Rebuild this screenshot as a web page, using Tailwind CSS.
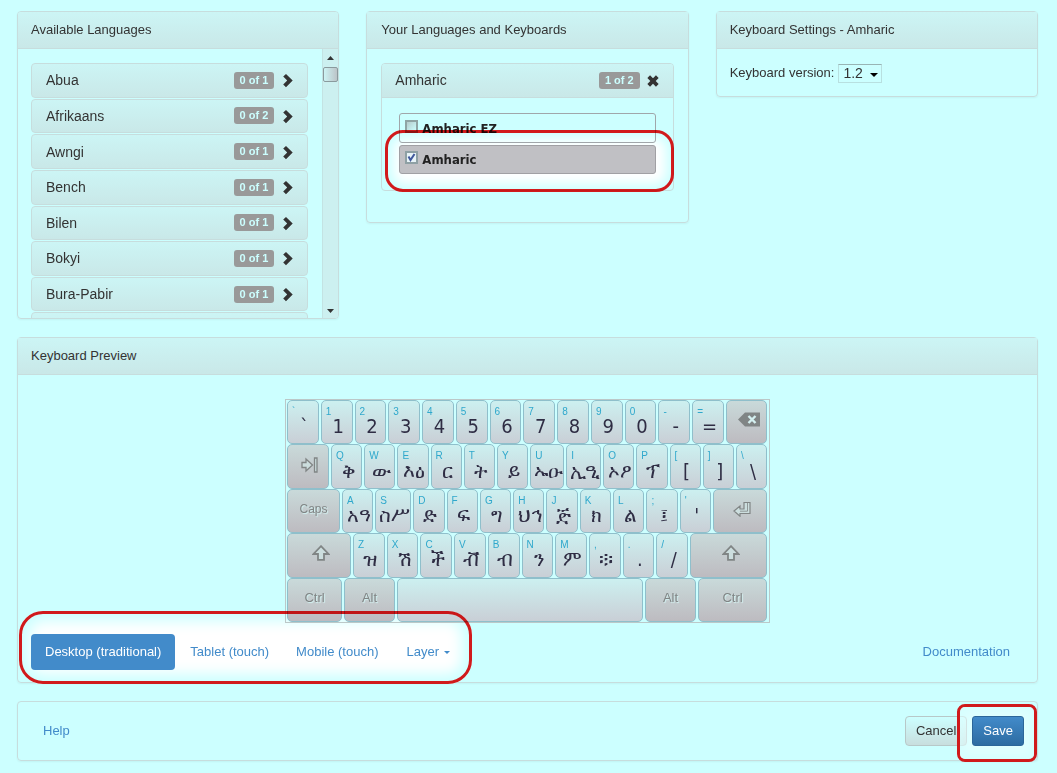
<!DOCTYPE html>
<html lang="en">
<head>
<meta charset="utf-8">
<title>Keyboard Configuration</title>
<script src="https://cdn.jsdelivr.net/npm/@tailwindcss/browser@4"></script>
</head>
<body class="min-h-screen bg-[#ccffff] pt-[11px] pr-[19px] pb-3 pl-[17px] font-['Liberation_Sans',Arial,sans-serif] text-[13px] leading-5 text-[#333333]">

<svg class="hidden" aria-hidden="true">
  <symbol id="chevron" viewBox="0 0 11 15"><path d="M1.2 3.6 4 .9 10.7 7.6 4 14.2 1.2 11.5 5.2 7.6Z" fill="#333"/></symbol>
</svg>

<main class="flex flex-col gap-[18px]">
  <div class="grid grid-cols-3 items-start gap-[27px]">

    <section class="flex h-[308px] flex-col overflow-hidden rounded-[4px] border border-[#c7dddd] shadow-xs">
      <h2 class="border-b border-[#c7dddd] bg-linear-to-b from-[#ccf5f5] to-[#c9e8e8] px-[13px] py-2">Available Languages</h2>
      <div class="flex min-h-0 flex-1">
        <ul id="languages" class="grid h-[284px] flex-1 grid-rows-8 gap-px mt-[14px] mr-[14px] ml-[13px]"></ul>
        <div class="flex w-4 flex-col items-center justify-between border-l border-[#c3e3e3] bg-[#ccf0f0] pt-[7px] pb-[5px]" aria-hidden="true">
          <div class="flex w-full flex-col items-center gap-[7px]">
            <svg width="7" height="4"><path d="M0 4 3.500 0 7 4Z" fill="#333"/></svg>
            <div class="h-[15px] w-full rounded-[2px] border border-[#8a9a9d] bg-linear-to-r from-[#ccf4f4] to-[#bcc4c8]"></div>
          </div>
          <svg width="7" height="4"><path d="M0 0 3.500 4 7 0Z" fill="#333"/></svg>
        </div>
      </div>
    </section>

    <section class="relative rounded-[4px] border border-[#c7dddd] pb-[31px] shadow-xs">
      <h2 class="border-b border-[#c7dddd] bg-linear-to-b from-[#ccf5f5] to-[#c9e8e8] px-[14px] py-2">Your Languages and Keyboards</h2>
      <div class="absolute top-[118px] right-[14px] left-[18px] h-[62px] rounded-[18px] bg-white shadow-[inset_0_0_12px_8px_#ccffff]"></div>
      <div class="relative mx-[14px] mt-[14px] rounded-[4px] border border-[#c7dddd]">
        <div class="flex items-center rounded-t-[3px] border-b border-[#c7dddd] bg-linear-to-b from-[#ccf5f5] to-[#c9e8e8] py-[7px] pr-[14px] pl-[13px]">
          <h3 class="flex-1 text-[14px] leading-[19px]">Amharic</h3>
          <span class="rounded-[3px] bg-[#999999] px-[6px] text-[11px] leading-[17px] font-bold text-[#ccffff]">1 of 2</span>
          <button type="button" aria-label="Remove Amharic" class="ml-[7px]">
            <svg class="mt-px" width="12" height="12" viewBox="0 0 12 12"><path d="M1.700 1.700 10.300 10.300M10.300 1.700 1.700 10.300" stroke="#333" stroke-width="3.800"/></svg>
          </button>
        </div>
        <div class="flex flex-col gap-[2px] px-[17px] pt-[15px] pb-4 font-['DejaVu_Sans_Condensed','DejaVu_Sans',sans-serif] text-[13px] font-bold text-[#222222]">
          <label class="flex h-[30px] rounded-[3px] border border-[#a0a6aa] px-[5px] pt-[6px]">
            <input type="checkbox" class="mr-1 size-[13px] appearance-none border-2 border-[#8ea4a4] bg-linear-to-br from-[#b4cccc] to-[#ccffff]">
            <span class="leading-[17px]">Amharic EZ</span>
          </label>
          <label class="flex h-[29px] rounded-[3px] border border-[#a0a0a4] bg-[#c0c0c4] px-[5px] pt-[5px]">
            <span class="relative mr-1 size-[13px]">
              <input type="checkbox" checked class="block size-[13px] appearance-none border-2 border-[#8ea0a4] bg-[#e8f4f8]">
              <svg class="pointer-events-none absolute inset-0" width="13" height="13"><path d="M3.500 5.500 5.500 9 9.500 3" fill="none" stroke="#40589c" stroke-width="2"/></svg>
            </span>
            <span class="leading-[17px]">Amharic</span>
          </label>
        </div>
      </div>
      <div class="pointer-events-none absolute top-[118px] right-[14px] left-[18px] h-[62px] rounded-[18px] border-3 border-[#ff1a1c] mix-blend-multiply"></div>
    </section>

    <section class="rounded-[4px] border border-[#c7dddd] shadow-xs">
      <h2 class="border-b border-[#c7dddd] bg-linear-to-b from-[#ccf5f5] to-[#c9e8e8] px-[13px] py-2">Keyboard Settings - Amharic</h2>
      <div class="flex items-center gap-1 px-[13px] pt-[14px] pb-[13px]">
        <label for="version">Keyboard version:</label>
        <div class="relative">
          <select id="version" class="block h-[19px] w-[44px] appearance-none border border-[#b8e0e0] border-t-[#98b4b4] pl-1 text-[14px] leading-[17px] text-[#333333]"><option>1.2</option></select>
          <svg class="pointer-events-none absolute top-[9px] right-1" width="8" height="4"><path d="M0 0H8L4 4Z" fill="#000"/></svg>
        </div>
      </div>
    </section>
  </div>

  <section class="relative rounded-[4px] border border-[#c7dddd] pb-3 shadow-xs">
    <h2 class="border-b border-[#c7dddd] bg-linear-to-b from-[#ccf5f5] to-[#c9e8e8] px-[13px] py-2">Keyboard Preview</h2>
    <div class="absolute top-[273px] left-px h-[73px] w-[453px] rounded-[24px] bg-white shadow-[inset_0_0_14px_10px_#ccffff]"></div>
    <div id="keyboard" class="relative mx-auto mt-6 grid h-[224px] w-[485px] grid-rows-5 border border-[#bcc8c8] pr-[2px] pl-px"></div>
    <div class="relative mt-[11px] flex items-center justify-between pr-[27px] pl-[13px]">
      <nav class="flex gap-[2px] text-[#428bca]">
        <a href="#desktop" class="rounded-[4px] bg-[#428bca] px-[14px] py-2 text-white">Desktop (traditional)</a>
        <a href="#tablet" class="px-[13px] py-2">Tablet (touch)</a>
        <a href="#mobile" class="px-3 py-2">Mobile (touch)</a>
        <button type="button" class="flex items-center gap-[5px] px-[14px] py-2">Layer <svg width="6" height="3"><path d="M0 0H6L3 3Z" fill="#428bca"/></svg></button>
      </nav>
      <a href="#documentation" class="text-[#428bca]">Documentation</a>
    </div>
    <div class="pointer-events-none absolute top-[273px] left-px h-[73px] w-[453px] rounded-[24px] border-3 border-[#ff1a1c] mix-blend-multiply"></div>
  </section>

  <footer class="relative flex items-center rounded-[4px] border border-[#c7dddd] py-[14px] pr-[13px] pl-[25px] shadow-xs">
    <a href="#help" class="flex-1 text-[#428bca]">Help</a>
    <button type="button" class="relative mr-[5px] rounded-[4px] border border-[#b8c8c8] bg-linear-to-b from-[#ccffff] to-[#c8dede] px-[10px] py-1">Cancel</button>
    <div class="absolute top-[2px] right-0 h-[58px] w-[80px] rounded-[8px] border-3 border-[#d01a1c]">
      <div class="size-full rounded-[5px] bg-white/40 shadow-[inset_0_0_8px_4px_#ccffff88]"></div>
    </div>
    <button type="button" class="relative rounded-[3px] border border-[#2b669a] bg-linear-to-b from-[#428bca] to-[#2d6ca2] px-[10px] py-1 text-white">Save</button>
  </footer>
</main>

<template id="language-row">
  <li class="flex items-center rounded-[4px] border border-[#c7dddd] bg-linear-to-b from-[#ccf5f5] to-[#c9e8e8] pr-[14px] pl-[14px]">
    <span class="name flex-1 text-[14px]"></span>
    <span class="count rounded-[3px] bg-[#999999] px-[6px] text-[11px] leading-[17px] font-bold text-[#ccffff]"></span>
    <button type="button" class="ml-2"><svg class="mt-px" width="11" height="15"><use href="#chevron"/></svg></button>
  </li>
</template>

<script>
const languages = [['Abua', 1], ['Afrikaans', 2], ['Awngi', 1], ['Bench', 1], ['Bilen', 1], ['Bokyi', 1], ['Bura-Pabir', 1]];
const list = document.getElementById('languages');
for (const [name, total] of languages) {
  const row = document.getElementById('language-row').content.cloneNode(true);
  row.querySelector('.name').textContent = name;
  row.querySelector('.count').textContent = `0 of ${total}`;
  row.querySelector('button').setAttribute('aria-label', `Add ${name}`);
  list.append(row);
}
// Top edge of the next row, below the fold
const next = document.createElement('li');
next.className = 'rounded-[4px] border border-[#c7dddd] bg-linear-to-b from-[#ccf5f5] to-[#c9e8e8]';
list.append(next);

const icons = {
  backspace: '<svg aria-label="Backspace" class="ml-[5px] -mt-px" width="22" height="15" viewBox="0 0 22 15"><path d="M0 7.500 7 .5H22V14.500H7Z" fill="#808585"/><path d="m10.500 4 7 7m0-7-7 7" stroke="#d4f0f0" stroke-width="2.400"/></svg>',
  tab: '<svg aria-label="Tab" class="ml-1" width="18" height="16" viewBox="0 0 18 16" fill="#ccdede" stroke="#808585" stroke-width="1.300"><path d="M1 5.500H5V2L11.500 8 5 14V10.500H1Z"/><path d="M13.500 1H16V15H13.500Z"/></svg>',
  enter: '<svg aria-label="Enter" class="ml-1" width="18" height="16" viewBox="0 0 18 16" fill="#ccdede" stroke="#808585" stroke-width="1.200"><path d="M1 10 7 5V8H11V1.500H17V12.500H7V15.200Z"/><path d="M14.500 1.500V10.200H7" fill="none" stroke-width=".8"/></svg>',
  shift: '<svg aria-label="Shift" class="ml-1" width="18" height="16" viewBox="0 0 18 16" fill="#ccdede" stroke="#808585" stroke-width="1.800"><path d="M9 1.200 16.500 9H12V14.800H6V9H1.500Z"/></svg>'
};
const special = 'flex h-full shrink-0 items-center justify-center rounded-[5px] border border-[#8fbfcb] bg-linear-to-b from-[#c9dada] to-[#bdbbc0] text-[#808585] text-shadow-[1px_1px_1px_#d4f4f4] pb-1 ';
const letter = 'relative h-full flex-1 rounded-[5px] border border-[#8fbfcb] bg-linear-to-b from-[#ccf0f0] to-[#c9cfd6]';
const capStyle = "absolute top-[5px] left-1 text-[10px] leading-3 text-[#2fa8cc]";
const outputStyle = "flex justify-center pt-2 pl-[3px] text-[20px] leading-6 whitespace-nowrap text-[#2f2d44] ";
const latin = "font-['DejaVu_Sans_Condensed','DejaVu_Sans',sans-serif]";
const ethiopic = "font-['Liberation_Sans',Arial,sans-serif]";
const rows = [
  [['`','`'],['1','1'],['2','2'],['3','3'],['4','4'],['5','5'],['6','6'],['7','7'],['8','8'],['9','9'],['0','0'],['-','-'],['=','='],['@backspace','w-[41px]']],
  [['@tab','w-[42px]'],['Q','ቅ'],['W','ው'],['E','እዕ'],['R','ር'],['T','ት'],['Y','ይ'],['U','ኡዑ'],['I','ኢዒ'],['O','ኦዖ'],['P','ፕ'],['[','['],[']',']'],['\\','\\']],
  [['@Caps','w-[53px] text-[12px]'],['A','አዓ'],['S','ስሥ'],['D','ድ'],['F','ፍ'],['G','ግ'],['H','ህኅ'],['J','ጅ'],['K','ክ'],['L','ል'],[';','፤'],["'","'"],['@enter','w-[54px]']],
  [['@shift','w-[64px]'],['Z','ዝ'],['X','ሽ'],['C','ች'],['V','ቭ'],['B','ብ'],['N','ን'],['M','ም'],[',','፨'],['.','.'],['/','/'],['@shift','w-[77px]']],
  [['@Ctrl','w-[55px]'],['@Alt','w-[51px]'],['',''],['@Alt','w-[51px]'],['@Ctrl','w-[69px]']]
];
for (const keys of rows) {
  const row = document.createElement('div');
  row.className = 'flex min-h-0 gap-[2px]';
  for (const [cap, output] of keys) {
    const key = document.createElement('button');
    key.type = 'button';
    if (cap[0] === '@') {
      key.className = special + output;
      key.innerHTML = icons[cap.slice(1)] || cap.slice(1);
    } else if (cap) {
      key.className = letter;
      key.innerHTML = '<span></span><span></span>';
      key.firstChild.className = capStyle;
      key.firstChild.textContent = cap;
      key.lastChild.className = outputStyle + (output > '\u1200' ? ethiopic : latin);
      key.lastChild.textContent = output;
    } else {
      key.className = letter;
      key.setAttribute('aria-label', 'Space');
    }
    row.append(key);
  }
  document.getElementById('keyboard').append(row);
}
</script>
</body>
</html>
